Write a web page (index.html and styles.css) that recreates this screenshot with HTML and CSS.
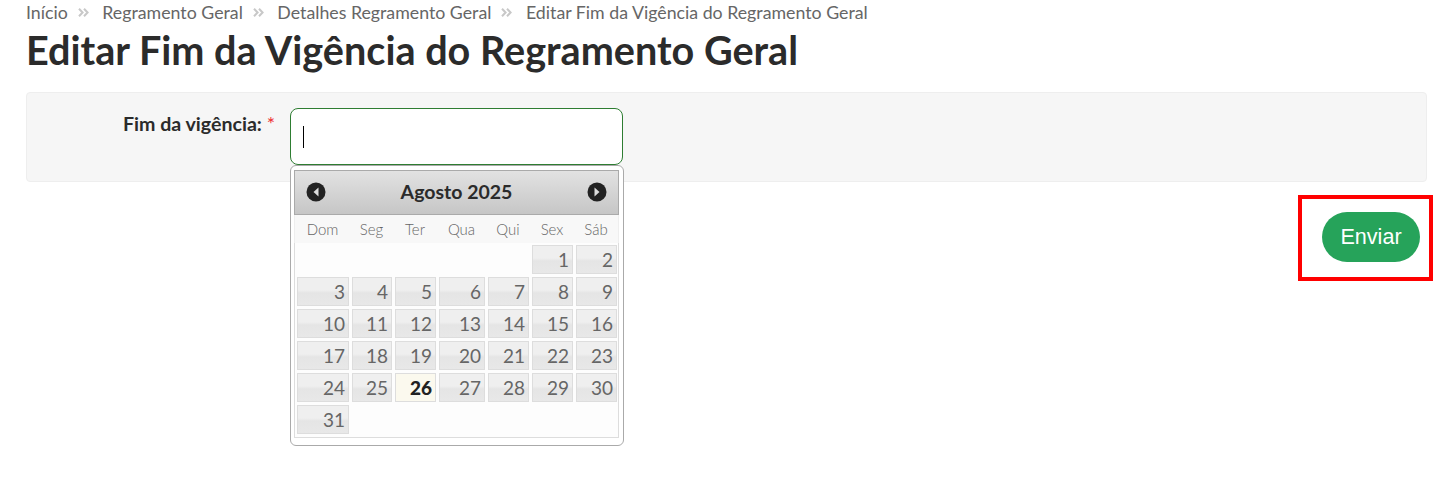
FILE: index.html
```html
<!DOCTYPE html>
<html lang="pt-BR">
<head>
    <meta charset="UTF-8">
    <meta name="viewport" content="width=device-width, initial-scale=1.0">
    <title>Editar Fim da Vigência do Regramento Geral</title>
    <link rel="stylesheet" href="styles.css">
</head>
<body>
    <nav class="breadcrumb">
        <a>Início</a>
        <svg class="sep" viewBox="0 0 11 9"><path d="M1 .7 4.6 4.5 1 8.3M6 .7 9.6 4.5 6 8.3"/></svg>
        <a>Regramento Geral</a>
        <svg class="sep" viewBox="0 0 11 9"><path d="M1 .7 4.6 4.5 1 8.3M6 .7 9.6 4.5 6 8.3"/></svg>
        <a>Detalhes Regramento Geral</a>
        <svg class="sep" viewBox="0 0 11 9"><path d="M1 .7 4.6 4.5 1 8.3M6 .7 9.6 4.5 6 8.3"/></svg>
        <a>Editar Fim da Vigência do Regramento Geral</a>
    </nav>
    <h1 class="page-title">Editar Fim da Vigência do Regramento Geral</h1>

    <div class="panel">
        <label class="field-label">Fim da vigência: <span class="required">*</span></label>
        <div class="field">
            <div class="date-input"><span class="caret"></span></div>

            <div class="datepicker">
                <div class="dp-header">
                    <svg class="dp-nav" viewBox="0 0 20 20"><circle cx="10" cy="10" r="9.5" fill="#222"/><path d="M12.5 5.5v9L7.5 10z" fill="#ddd"/></svg>
                    <span class="dp-title">Agosto 2025</span>
                    <svg class="dp-nav" viewBox="0 0 20 20"><circle cx="10" cy="10" r="9.5" fill="#222"/><path d="M7.5 5.5v9L12.5 10z" fill="#ddd"/></svg>
                </div>
                <div class="dp-weekdays">
                    <span>Dom</span><span>Seg</span><span>Ter</span><span>Qua</span><span>Qui</span><span>Sex</span><span>Sáb</span>
                </div>
                <div class="dp-days">
                    <span class="empty"></span><span class="empty"></span><span class="empty"></span><span class="empty"></span><span class="empty"></span><span class="day">1</span><span class="day">2</span>
                    <span class="day">3</span><span class="day">4</span><span class="day">5</span><span class="day">6</span><span class="day">7</span><span class="day">8</span><span class="day">9</span>
                    <span class="day">10</span><span class="day">11</span><span class="day">12</span><span class="day">13</span><span class="day">14</span><span class="day">15</span><span class="day">16</span>
                    <span class="day">17</span><span class="day">18</span><span class="day">19</span><span class="day">20</span><span class="day">21</span><span class="day">22</span><span class="day">23</span>
                    <span class="day">24</span><span class="day">25</span><span class="day today">26</span><span class="day">27</span><span class="day">28</span><span class="day">29</span><span class="day">30</span>
                    <span class="day">31</span><span class="empty"></span><span class="empty"></span><span class="empty"></span><span class="empty"></span><span class="empty"></span><span class="empty"></span>
                </div>
            </div>
        </div>
    </div>

    <div class="actions">
        <div class="highlight">
            <button class="submit-button">Enviar</button>
        </div>
    </div>
</body>
</html>
```

FILE: styles.css
```css
html, body {
    height: 100%;
}

body {
    margin: 0;
    padding: 0 19px 0 26px;
    box-sizing: border-box;
    font-family: Lato, "Open Sans", sans-serif;
    background: #fff;
    color: #2b2b2b;
}

.breadcrumb {
    display: flex;
    align-items: center;
    height: 24px;
    font-size: 17.75px;
    line-height: 24px;
    color: #666;
    white-space: nowrap;
}

.sep {
    width: 11px;
    height: 9px;
    margin: 0 13.5px 0 10px;
    fill: none;
    stroke: #c8c8c8;
    stroke-width: 2;
}

.page-title {
    margin: 0;
    height: 68px;
    font-size: 39.6px;
    line-height: 52px;
    font-weight: 700;
    color: #2b2b2b;
}

.panel {
    display: flex;
    height: 88px;
    margin-right: 6px;
    background: #f6f6f6;
    border: 1px solid #eee;
    border-radius: 4px;
}

.field-label {
    width: 248px;
    margin-top: 18px;
    text-align: right;
    font-size: 19.6px;
    line-height: 26px;
    font-weight: 700;
    color: #2b2b2b;
}

.required {
    color: #e33;
    font-weight: 400;
}

.field {
    position: relative;
    margin: 15px 0 0 15px;
}

.date-input {
    display: flex;
    align-items: center;
    width: 333px;
    height: 57px;
    padding-left: 12px;
    box-sizing: border-box;
    background: #fff;
    border: 1px solid #2e7d32;
    border-radius: 8px;
}

.caret {
    width: 1px;
    height: 22px;
    background: #000;
}

.datepicker {
    position: absolute;
    top: 57px;
    left: 0;
    width: 334px;
    height: 281px;
    box-sizing: border-box;
    padding: 4px 4px 0 3px;
    background: #fff;
    border: 1px solid #aaa;
    border-radius: 6px;
}

.dp-header {
    display: flex;
    align-items: center;
    justify-content: space-between;
    height: 45px;
    box-sizing: border-box;
    padding: 0 11px 3px 11px;
    background: linear-gradient(#e2e2e2, #c6c6c6);
    border: 1px solid #aaa;
}

.dp-nav {
    width: 20px;
    height: 20px;
    margin-top: 1px;
}

.dp-title {
    font-size: 19.5px;
    font-weight: 700;
    color: #2b2b2b;
}

.dp-weekdays {
    display: grid;
    grid-template-columns: 55px 43px 44px 49px 44px 44px 44px;
    height: 28px;
    align-items: center;
    text-align: center;
    font-size: 15px;
    font-weight: 300;
    color: #666;
    background: #f8f8f8;
    border-left: 1px solid #eee;
    border-right: 1px solid #eee;
}

.dp-days {
    display: grid;
    grid-template-columns: 52px 40px 41px 46px 41px 41px 41px;
    grid-auto-rows: 29px;
    gap: 3px;
    height: 195px;
    padding: 2px 2px 0 2px;
    box-sizing: border-box;
    background: #fdfdfd;
    border: 1px solid #ddd;
    border-top: 0;
}

.day {
    padding-right: 3px;
    text-align: right;
    font-size: 19px;
    line-height: 27px;
    color: #666;
    background: linear-gradient(#efefef 45%, #e5e5e5 55%, #e8e8e8);
    border: 1px solid #ddd;
    box-sizing: border-box;
}

.today {
    font-weight: 900;
    color: #222;
    background: #fbf9ee;
}

.actions {
    display: flex;
    justify-content: flex-end;
    margin-top: 13px;
}

.highlight {
    display: flex;
    align-items: flex-start;
    justify-content: flex-end;
    width: 135px;
    height: 86px;
    padding: 13px 9px 0 0;
    box-sizing: border-box;
    border: 4px solid #f00;
}

.submit-button {
    width: 98px;
    height: 50px;
    border: none;
    border-radius: 25px;
    background: #26a35a;
    color: #fff;
    font-family: "Liberation Sans", Arial, sans-serif;
    font-size: 21.6px;
    cursor: pointer;
}
```
